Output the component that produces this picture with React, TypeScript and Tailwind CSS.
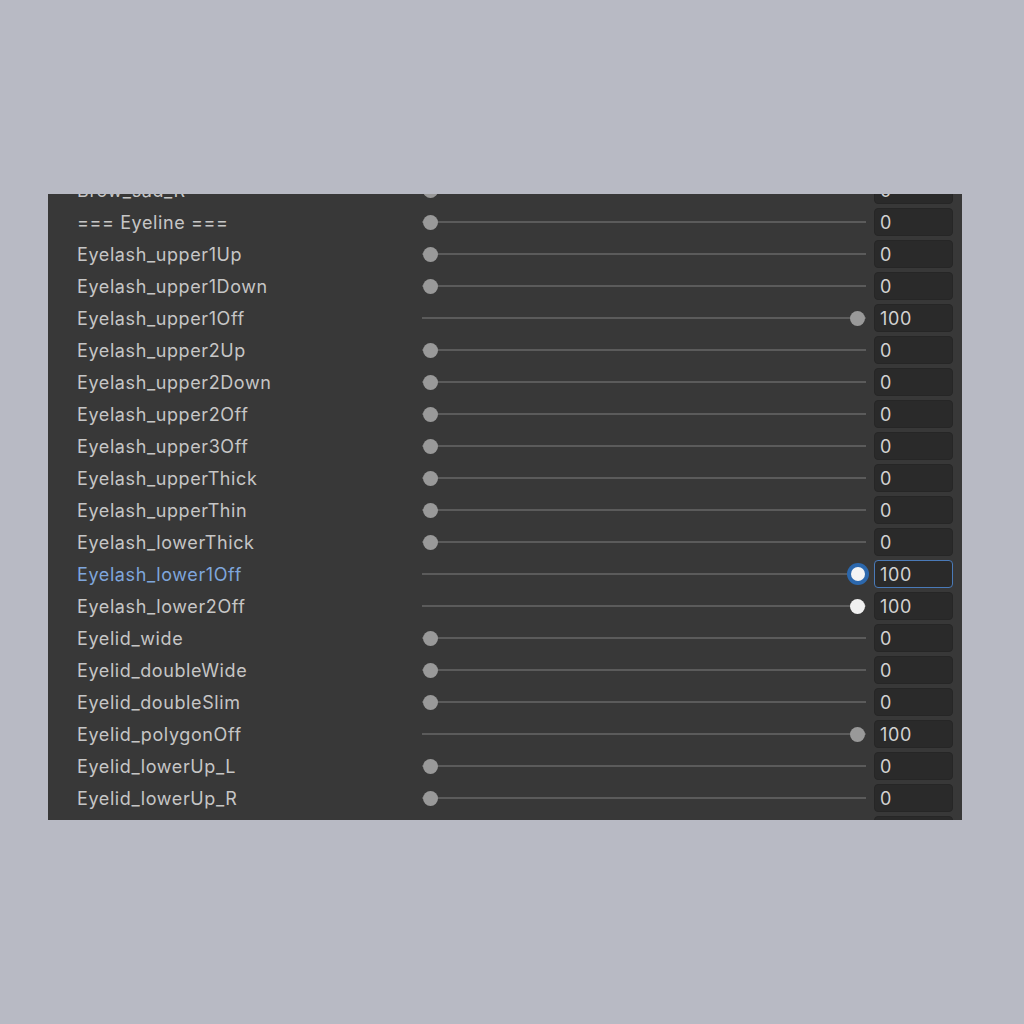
const rows: Array<{ name: string; value: number; state?: "active" | "hover" }> = [
  { name: "Brow_sad_R", value: 0 },
  { name: "=== Eyeline ===", value: 0 },
  { name: "Eyelash_upper1Up", value: 0 },
  { name: "Eyelash_upper1Down", value: 0 },
  { name: "Eyelash_upper1Off", value: 100 },
  { name: "Eyelash_upper2Up", value: 0 },
  { name: "Eyelash_upper2Down", value: 0 },
  { name: "Eyelash_upper2Off", value: 0 },
  { name: "Eyelash_upper3Off", value: 0 },
  { name: "Eyelash_upperThick", value: 0 },
  { name: "Eyelash_upperThin", value: 0 },
  { name: "Eyelash_lowerThick", value: 0 },
  { name: "Eyelash_lower1Off", value: 100, state: "active" },
  { name: "Eyelash_lower2Off", value: 100, state: "hover" },
  { name: "Eyelid_wide", value: 0 },
  { name: "Eyelid_doubleWide", value: 0 },
  { name: "Eyelid_doubleSlim", value: 0 },
  { name: "Eyelid_polygonOff", value: 100 },
  { name: "Eyelid_lowerUp_L", value: 0 },
  { name: "Eyelid_lowerUp_R", value: 0 },
  { name: "Eyelid_lowerDown_L", value: 0 },
];

function Slider({ value, state }: { value: number; state?: "active" | "hover" }) {
  const left = (value / 100) * 427;
  return (
    <div className="relative h-8 w-[444px]">
      <div className="absolute left-0 right-0 top-[15px] h-[2px] bg-[#5b5b5b]" />
      {state === "active" ? (
        <div
          className="absolute top-[5px] flex h-[22px] w-[22px] items-center justify-center rounded-full bg-[#2c68ad]"
          style={{ left: left + 1 - 3.5 }}
        >
          <div className="h-[14px] w-[14px] rounded-full bg-[#f4f4f4]" />
        </div>
      ) : (
        <div
          className={`absolute top-[8.5px] h-[15px] w-[15px] rounded-full ${state === "hover" ? "bg-[#f0f0f0]" : "bg-[#999999]"}`}
          style={{ left: left + 1 }}
        />
      )}
    </div>
  );
}

export default function App() {
  return (
    <div className="flex h-[1024px] w-[1024px] items-start bg-[#b8bac4] pl-[48px] pt-[194px] font-['Inter','Liberation_Sans',sans-serif]">
      <div className="h-[626px] w-[914px] overflow-hidden bg-[#383838]">
        <div className="-mt-[20px] flex flex-col">
          {rows.map((row) => (
            <div key={row.name} className="flex h-8 items-center">
              <div
                className={`w-[374px] shrink-0 pl-[29px] pt-[2px] text-[18px] leading-none tracking-[0.6px] ${row.state === "active" ? "text-[#7fa6dc]" : "text-[#c6c6c6]"}`}
              >
                {row.name}
              </div>
              <Slider value={row.value} state={row.state} />
              <div
                className={`ml-[8px] flex h-[28px] w-[79px] items-center rounded-[4px] border px-[5px] pt-[2px] text-[18px] leading-none tracking-[0.6px] text-[#d2d2d2] ${row.state === "active" ? "border-[#4a7ab8] bg-[#2a2a2a]" : "border-[#262626] bg-[#2a2a2a]"}`}
              >
                {row.value}
              </div>
            </div>
          ))}
        </div>
      </div>
    </div>
  );
}
